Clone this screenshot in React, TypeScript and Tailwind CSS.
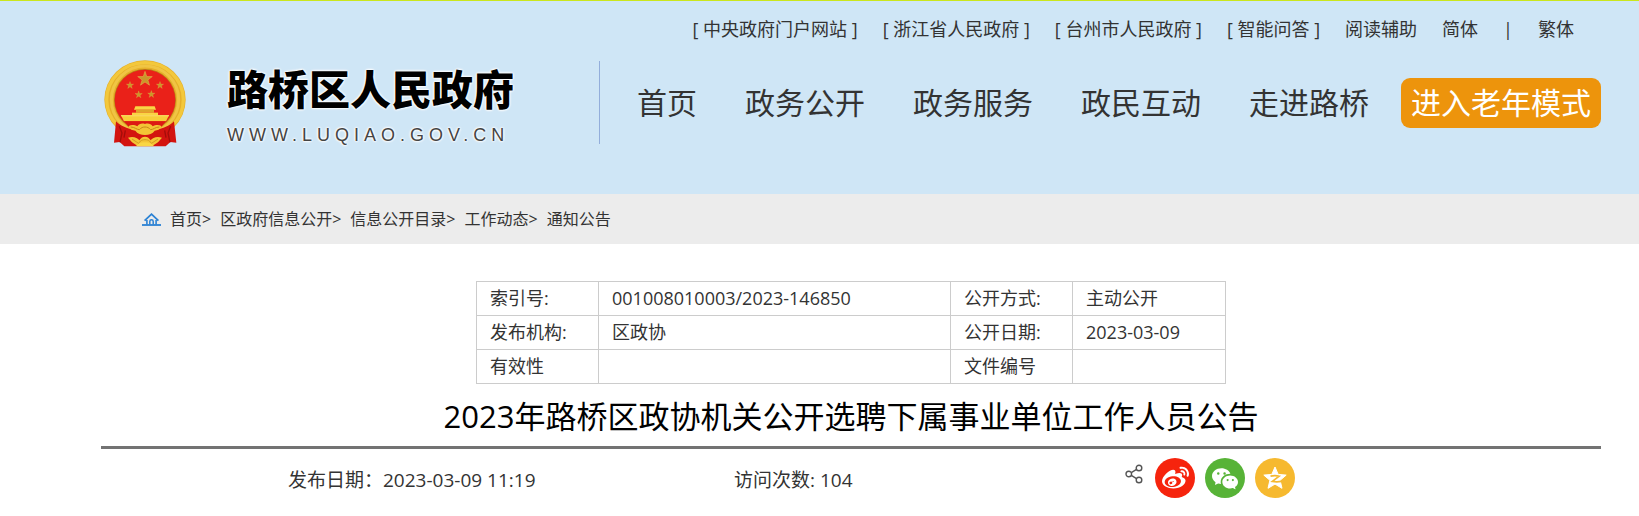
import React from "react";
import { FaWeibo } from "react-icons/fa";
import { BsWechat } from "react-icons/bs";

const topLinks = [
  "[ 中央政府门户网站 ]",
  "[ 浙江省人民政府 ]",
  "[ 台州市人民政府 ]",
  "[ 智能问答 ]",
  "阅读辅助",
  "简体",
];

const navLinks = ["首页", "政务公开", "政务服务", "政民互动", "走进路桥"];

const crumbs = ["首页", "区政府信息公开", "信息公开目录", "工作动态", "通知公告"];

const infoRows = [
  ["索引号:", "001008010003/2023-146850", "公开方式:", "主动公开"],
  ["发布机构:", "区政协", "公开日期:", "2023-03-09"],
  ["有效性", "", "文件编号", ""],
];

const STAR = "M0 -10 L2.3 -3.2 L9.5 -3.1 L3.8 1.2 L5.9 8.1 L0 4 L-5.9 8.1 L-3.8 1.2 L-9.5 -3.1 L-2.3 -3.2 Z";

function Emblem() {
  return (
    <svg viewBox="40 29 246 261" className="h-[87px] w-[82px]" aria-hidden="true">
      <ellipse cx="163" cy="148" rx="122" ry="118" fill="#e6b02a" />
      <ellipse cx="163" cy="148" rx="115" ry="111" fill="none" stroke="#f3c83c" strokeWidth="10" />
      <circle cx="163" cy="148" r="101" fill="none" stroke="#f0c544" strokeWidth="9" />
      <circle cx="163" cy="149" r="93" fill="#b98017" />
      <circle cx="163" cy="149" r="91" fill="#ea2119" />
      <g fill="#c9972a" stroke="#e8c154" strokeWidth="0.6">
        <path d={STAR} transform="translate(163 86) scale(2.3)" />
        <path d={STAR} transform="translate(118 105) scale(1.15)" />
        <path d={STAR} transform="translate(208 105) scale(1.15)" />
        <path d={STAR} transform="translate(144 133) scale(1.15)" />
        <path d={STAR} transform="translate(182 132) scale(1.15)" />
      </g>
      <path d="M134 168h58l4 10h-66z" fill="#f9d644" />
      <path d="M136 178h54v9h-54z" fill="#e0a62a" />
      <path d="M124 187h78v8h-78z" fill="#f9d644" />
      <path d="M91 195h144l-9 18H100z" fill="#f7cf3a" />
      <path d="M91 195h144v3H91z" fill="#fbe36a" />
      <path d="M100 213h126l-14 16H114z" fill="#dc1a13" />
      <path d="M76 213c14 14 34 22 52 25l70 0c18-3 38-11 52-25l7 64-18-2-14 13H101l-14-13-17 2z" fill="#d3140f" />
      <path d="M86 228l8 20-6 28M240 228l-8 20 6 28M104 240l-4 22M222 240l4 22" fill="none" stroke="#a30d0a" strokeWidth="4" />
      <path
        d="M114 227c8-5 18-4 26 1 5-8 14-10 23-7 9-3 18-1 23 7 8-5 18-6 26-1-2 10-12 13-20 14-6 9-17 13-29 13s-23-4-29-13c-8-1-18-4-20-14z"
        fill="#f3c535"
      />
      <path d="M120 230c12 0 18 8 26 8 5-6 11-8 17-8s12 2 17 8c8 0 14-8 26-8" fill="none" stroke="#c88a18" strokeWidth="3" />
      <path d="M112 262c16-5 28 0 34 8 5-8 10-11 17-11s12 3 17 11c6-8 18-13 34-8l-12 14-16 10h-46l-16-10z" fill="#f3c535" />
      <path d="M142 286c2-12 10-18 21-18s19 6 21 18M124 266l18 12M202 266l-18 12" fill="none" stroke="#d49a20" strokeWidth="3" />
      <path d="M136 288c4-8 14-12 27-12s23 4 27 12z" fill="#f9d644" />
    </svg>
  );
}

function HomeIcon() {
  return (
    <svg viewBox="0 0 19 13" className="h-[13px] w-[19px]" fill="none" stroke="#2b82d4" aria-hidden="true">
      <path d="M2.600 7.600L9.500 1.200l6.900 6.400" strokeWidth="1.800" />
      <path d="M4.900 7v4.600M14.100 7v4.600" strokeWidth="1.600" />
      <path d="M7.800 11.600V8.400a1.700 1.700 0 0 1 3.400 0v3.200" strokeWidth="1.500" />
      <path d="M0 12h19" strokeWidth="1.800" />
    </svg>
  );
}

function ShareIcon() {
  return (
    <svg viewBox="0 0 18 20" className="h-5 w-[18px]" fill="none" stroke="#555" strokeWidth="1.4" aria-hidden="true">
      <circle cx="3.8" cy="10" r="2.8" />
      <circle cx="14" cy="4" r="2.8" />
      <circle cx="14" cy="16" r="2.8" />
      <path d="M6.3 8.6l5.2-3.2M6.3 11.4l5.2 3.2" />
    </svg>
  );
}

function QzoneIcon() {
  return (
    <svg viewBox="0 0 24 24" className="h-6 w-6" aria-hidden="true">
      <path
        d="M12 1l3.2 7.4 8 .7-6.1 5.2 1.9 8L12 18.1 5 22.3l1.900-8L.8 9.1l8-.7z"
        fill="#fff"
        stroke="#fff"
        strokeLinejoin="round"
      />
      <path d="M7.5 10.2c3-.7 6-.7 8.7 0L9.3 15.4c3 .5 6 .5 9 0" fill="none" stroke="#f6b92f" strokeWidth="1.7" />
    </svg>
  );
}

export default function App() {
  return (
    <div className="bg-white font-['Open_Sans','Noto_Sans_CJK_SC',sans-serif] text-[#333]">
      <header className="h-[194px] border-t border-[#cbe61c] bg-[#cfe6f6] pl-[101px] pr-[38px]">
        <div className="flex h-[57px] items-center justify-end gap-[25px] pr-[27px] text-lg leading-[27px]">
          {topLinks.map((label) => (
            <a key={label} href="#" className="whitespace-nowrap">
              {label}
            </a>
          ))}
          <span>|</span>
          <a href="#">繁体</a>
        </div>

        <div className="flex items-start justify-between">
          <a href="#" className="flex pl-[3px] pt-[2px]">
            <Emblem />
            <span className="ml-[41px] flex flex-col text-black [text-shadow:0_0_2px_#fff,0_0_2px_#fff,0_0_3px_#fff,0_0_3px_#fff]">
              <span className="mt-[5px] whitespace-nowrap text-[41px] font-black leading-[48px]">路桥区人民政府</span>
              <span className="mt-3 font-['Liberation_Sans',Arial,sans-serif] text-lg leading-5 tracking-[5px] text-[#444]">
                WWW.LUQIAO.GOV.CN
              </span>
            </span>
          </a>

          <nav className="mt-[3px] flex h-[83px] items-center border-l border-[#93aedb] pl-[37px] text-3xl">
            <div className="flex gap-12">
              {navLinks.map((label) => (
                <a key={label} href="#" className="whitespace-nowrap">
                  {label}
                </a>
              ))}
            </div>
            <button type="button" className="ml-8 h-[50px] w-[200px] whitespace-nowrap rounded-[9px] bg-[#ed940c] text-white">
              进入老年模式
            </button>
          </nav>
        </div>
      </header>

      <div className="flex h-[50px] items-center bg-[#ececec] pl-[142px]">
        <HomeIcon />
        <div className="ml-[9px] flex gap-[9px] text-base">
          {crumbs.map((label, i) => (
            <span key={label} className="whitespace-nowrap">
              <a href="#">{label}</a>
              {i < crumbs.length - 1 && <span>&gt;</span>}
            </span>
          ))}
        </div>
      </div>

      <main className="pl-[101px] pr-[38px] pt-[37px]">
        <table className="mx-auto w-[750px] table-fixed border-collapse text-lg leading-[33px]">
          <colgroup>
            <col className="w-[122px]" />
            <col className="w-[352px]" />
            <col className="w-[122px]" />
            <col />
          </colgroup>
          <tbody>
            {infoRows.map((row) => (
              <tr key={row[0]} className="h-[34px]">
                {row.map((cell, i) => (
                  <td key={i} className="border border-[#ccc] pl-[13px]">
                    {cell}
                  </td>
                ))}
              </tr>
            ))}
          </tbody>
        </table>

        <h1 className="border-b-[3px] border-[#737373] pb-2 pt-[10px] text-center text-[31px] leading-[44px] text-black">
          2023年路桥区政协机关公开选聘下属事业单位工作人员公告
        </h1>

        <div className="flex items-start pl-[187px] pt-[9px] text-[19px] leading-[44px]">
          <p className="w-[446px]">发布日期：2023-03-09 11:19</p>
          <p className="w-[391px]">访问次数: 104</p>
          <div className="flex items-start gap-[10px]">
            <button type="button" aria-label="分享" className="mr-[2px] mt-[6px]">
              <ShareIcon />
            </button>
            <button type="button" aria-label="微博" className="flex size-10 items-center justify-center rounded-full bg-[#f6240d] text-white">
              <FaWeibo size={27} />
            </button>
            <button type="button" aria-label="微信" className="flex size-10 items-center justify-center rounded-full bg-[#57b337] text-white">
              <BsWechat size={26} />
            </button>
            <button type="button" aria-label="QQ空间" className="flex size-10 items-center justify-center rounded-full bg-[#f6b92f]">
              <QzoneIcon />
            </button>
          </div>
        </div>
      </main>
    </div>
  );
}
